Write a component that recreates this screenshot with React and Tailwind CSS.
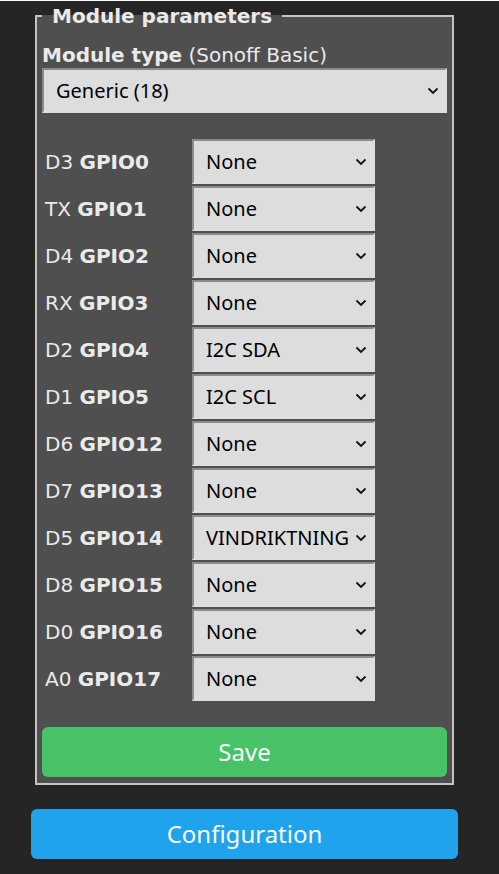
import React from "react";

const pins = [
    ["D3", "GPIO0", "None"],
    ["TX", "GPIO1", "None"],
    ["D4", "GPIO2", "None"],
    ["RX", "GPIO3", "None"],
    ["D2", "GPIO4", "I2C SDA"],
    ["D1", "GPIO5", "I2C SCL"],
    ["D6", "GPIO12", "None"],
    ["D7", "GPIO13", "None"],
    ["D5", "GPIO14", "VINDRIKTNING"],
    ["D8", "GPIO15", "None"],
    ["D0", "GPIO16", "None"],
    ["A0", "GPIO17", "None"],
];

const Chevron = () => (
    <svg width="12" height="8" viewBox="0 0 12 8" className="absolute right-[8px] top-1/2 -translate-y-1/2 pointer-events-none">
        <path d="M1.5 1.5 L6 6 L10.5 1.5" fill="none" stroke="#111" strokeWidth="1.8" />
    </svg>
);

const Select = ({ value, className }) => (
    <div className={"relative " + className}>
        <div className="h-full flex items-center pl-[12px] pr-[22px] bg-[#dddddd] border-2 border-t-[#8a8a8a] border-l-[#8a8a8a] border-r-[#dddddd] border-b-[#dddddd] text-black text-[20px] font-['Noto_Sans',sans-serif] whitespace-nowrap overflow-hidden">
            {value}
        </div>
        <Chevron />
    </div>
);

const App = () => {
    return (
        <div className="min-h-[874px] bg-[#252525] text-[#eaeaea] font-['DejaVu_Sans',sans-serif] text-[20px]">
            <div className="w-[427px] ml-[31px]">
                <fieldset className="mt-px ml-[4px] w-[419px] border-2 border-solid border-[#c4c4c4] bg-[#4f4f4f] px-[5px] pt-[11px] pb-[6px]">
                    <legend className="ml-0 px-[10px] font-bold leading-[30px]">Module parameters</legend>
                    <div className="leading-[26px]">
                        <b>Module type</b> (Sonoff Basic)
                    </div>
                    <Select value="Generic (18)" className="h-[45px] w-full" />
                    <div className="mt-[25px] flex flex-col">
                        {pins.map(([pin, gpio, val]) => (
                            <div key={gpio} className="h-[47px] flex items-center">
                                <div className="w-[150px] pl-[3px] whitespace-nowrap">
                                    {pin} <b>{gpio}</b>
                                </div>
                                <Select value={val} className="h-[45px] w-[183px]" />
                            </div>
                        ))}
                    </div>
                    <button className="mt-[25px] w-full h-[50px] rounded-[6px] bg-[#47c266] text-[#faffff] text-[24px] font-['Noto_Sans',sans-serif]">
                        Save
                    </button>
                </fieldset>
                <button className="mt-[24px] w-[427px] h-[50px] rounded-[6px] bg-[#1fa3ec] text-[#faffff] text-[24px] font-['Noto_Sans',sans-serif]">
                    Configuration
                </button>
            </div>
        </div>
    );
};

export default App;
